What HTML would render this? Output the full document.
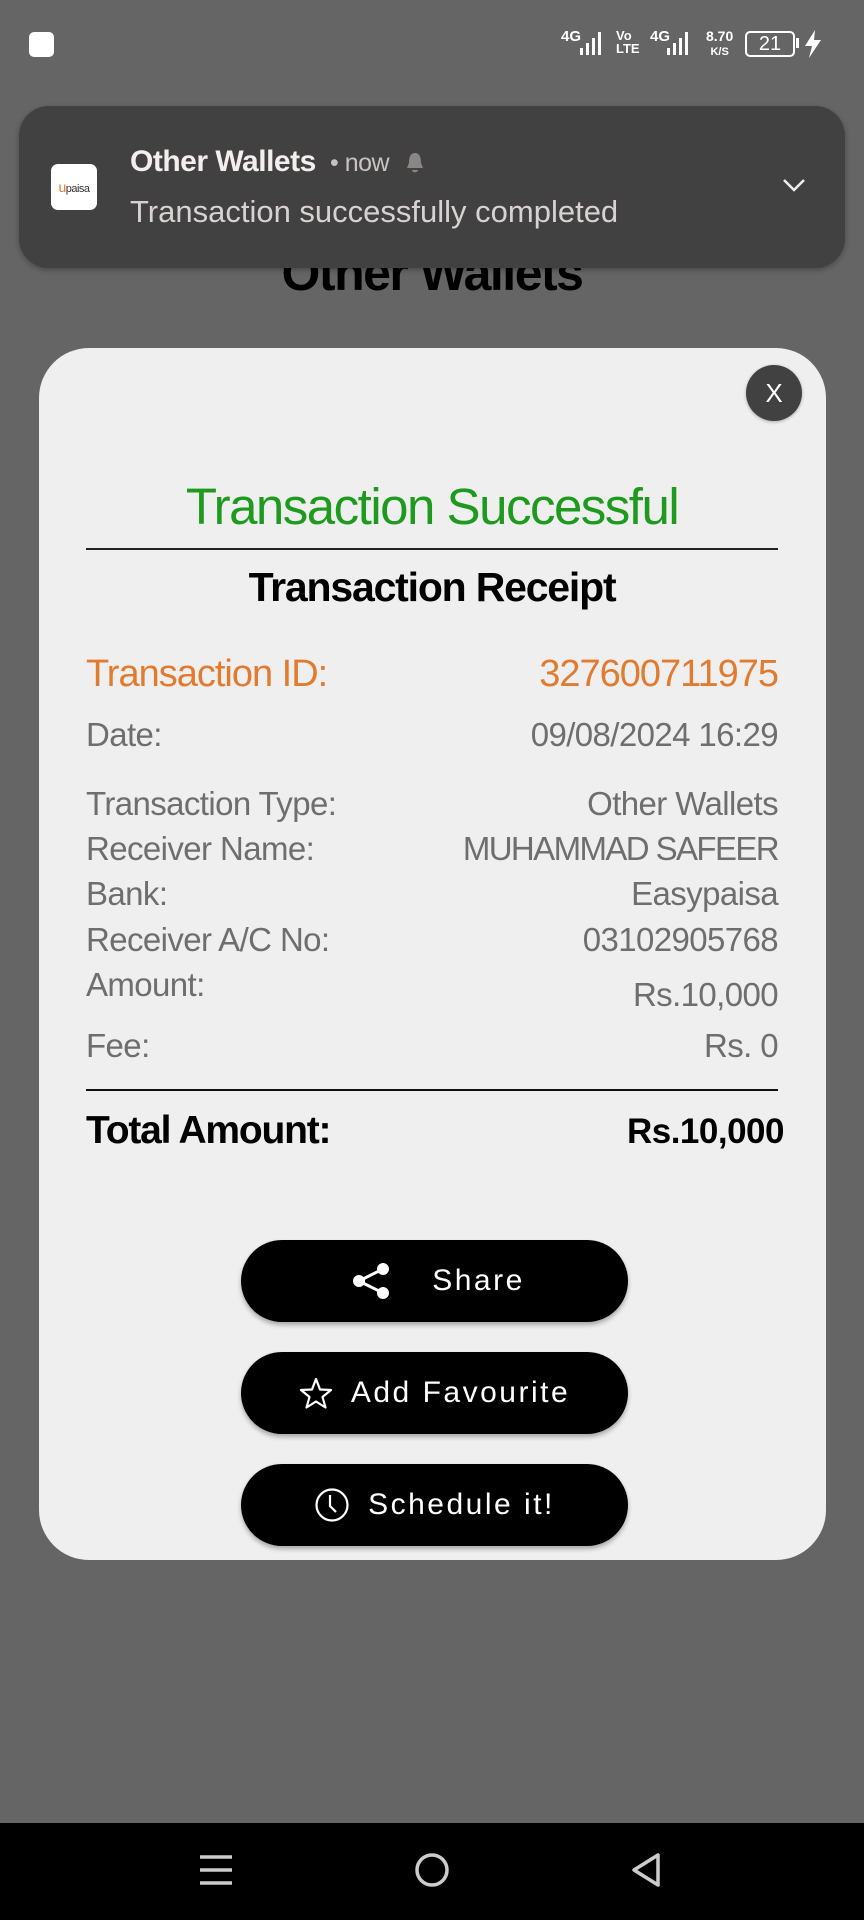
<!DOCTYPE html>
<html><head><meta charset="utf-8"><style>
*{margin:0;padding:0;box-sizing:border-box}
body{width:864px;height:1920px;background:#656565;position:relative;overflow:hidden;font-family:"Liberation Sans",sans-serif}
.a{position:absolute;white-space:nowrap;line-height:1}
.card{position:absolute;left:39px;top:348px;width:787px;height:1212px;background:#efefef;border-radius:50px}
.row{position:absolute;left:86px;width:692px;display:flex;justify-content:space-between;line-height:1;color:#6e6e6e;font-size:33px;letter-spacing:-0.6px}
.btn{position:absolute;left:241px;width:387px;height:82px;border-radius:41px;background:#000;color:#fff;box-shadow:0 3px 5px rgba(0,0,0,.3);font-family:"Liberation Sans",sans-serif;font-size:30px;letter-spacing:2.5px;display:flex;align-items:center;justify-content:center}
</style></head><body>
<div class="a" style="left:29px;top:32px;width:25px;height:25px;background:#fff;border-radius:5px"></div>
<div class="a" style="left:561px;top:29px;color:#fff;font-size:15px;font-weight:bold">4G</div>
<svg class="a" style="left:578px;top:30px" width="30" height="27"><g fill="#fff"><rect x="2" y="18" width="3" height="7"/><rect x="8" y="13" width="3" height="12"/><rect x="14" y="8" width="3" height="17"/><rect x="20" y="2" width="3" height="23"/></g></svg>
<div class="a" style="left:616px;top:29px;color:#fff;font-size:13px;font-weight:bold;line-height:13px">Vo<br>LTE</div>
<div class="a" style="left:650px;top:29px;color:#fff;font-size:15px;font-weight:bold">4G</div>
<svg class="a" style="left:665px;top:30px" width="30" height="27"><g fill="#fff"><rect x="2" y="18" width="3" height="7"/><rect x="8" y="13" width="3" height="12"/><rect x="14" y="8" width="3" height="17"/><rect x="20" y="2" width="3" height="23"/></g></svg>
<div class="a" style="left:706px;top:29px;color:#fff;font-size:14px;font-weight:bold;line-height:14px;text-align:center">8.70<br><span style="font-size:11px">K/S</span></div>
<div class="a" style="left:745px;top:31px;width:50px;height:26px;border:2px solid #fff;border-radius:5px;color:#fff;font-size:20px;text-align:center;line-height:22px">21</div>
<div class="a" style="left:796px;top:38px;width:3px;height:10px;background:#fff"></div>
<svg class="a" style="left:802px;top:29px" width="22" height="30"><path d="M13 1 L3 17 H10 L7 29 L19 11 H12 Z" fill="#fff"/></svg>

<div class="a" style="left:0;width:864px;text-align:center;top:248px;font-size:50px;font-weight:bold;color:#000;letter-spacing:-1.5px">Other Wallets</div>

<div class="a" style="left:19px;top:106px;width:826px;height:162px;background:#414141;border-radius:30px;box-shadow:0 2px 6px rgba(0,0,0,.3)"></div>
<div class="a" style="left:51px;top:164px;width:46px;height:46px;background:#fff;border-radius:7px;font-size:11px;line-height:46px;text-align:center;color:#333;letter-spacing:-0.5px"><span style="color:#e07b30;font-size:14px">u</span>paisa</div>
<div class="a" style="left:130px;top:147px;font-size:30px;font-weight:bold;color:#f4eeee;letter-spacing:-0.5px">Other Wallets <span style="font-weight:normal;color:#c8c2c2;font-size:25px">&nbsp;• now</span></div>
<svg class="a" style="left:405px;top:151px" width="20" height="24"><path d="M10 2 C5 2 4 7 4 12 L2 17 H18 L16 12 C16 7 15 2 10 2 Z M7 19 H13 C13 22 7 22 7 19Z" fill="#8a8686"/></svg>
<div class="a" style="left:130px;top:196px;font-size:31px;color:#d9d2d2">Transaction successfully completed</div>
<svg class="a" style="left:781px;top:176px" width="26" height="18"><path d="M3 4 L13 14 L23 4" stroke="#eee" stroke-width="2.5" fill="none"/></svg>

<div class="card"></div>
<div class="a" style="left:746px;top:365px;width:56px;height:56px;border-radius:50%;background:#414141;box-shadow:0 1px 3px rgba(0,0,0,.3);color:#fff;font-size:26px;line-height:56px;text-align:center">X</div>
<div class="a" style="left:0;width:864px;text-align:center;top:481px;font-size:51px;color:#1e9a1e;letter-spacing:-1.5px">Transaction Successful</div>
<div class="a" style="left:86px;top:548px;width:692px;height:2px;background:#222"></div>
<div class="a" style="left:0;width:864px;text-align:center;top:567px;font-size:41px;font-weight:bold;color:#000;letter-spacing:-1.2px">Transaction Receipt</div>
<div class="row" style="top:655px;font-size:38px;color:#e07b30;letter-spacing:-1px"><span>Transaction ID:</span><span>327600711975</span></div>
<div class="row" style="top:718px"><span>Date:</span><span>09/08/2024 16:29</span></div>
<div class="row" style="top:787px"><span>Transaction Type:</span><span>Other Wallets</span></div>
<div class="row" style="top:832px"><span>Receiver Name:</span><span style="letter-spacing:-1.6px">MUHAMMAD SAFEER</span></div>
<div class="row" style="top:877px"><span>Bank:</span><span>Easypaisa</span></div>
<div class="row" style="top:923px"><span>Receiver A/C No:</span><span>03102905768</span></div>
<div class="row" style="top:968px"><span>Amount:</span><span style="position:relative;top:10px">Rs.10,000</span></div>
<div class="row" style="top:1029px"><span>Fee:</span><span>Rs. 0</span></div>
<div class="a" style="left:86px;top:1089px;width:692px;height:2px;background:#111"></div>
<div class="a" style="left:86px;top:1111px;font-size:39px;font-weight:bold;color:#000;letter-spacing:-1.2px">Total Amount:</div>
<div class="a" style="left:600px;top:1114px;width:184px;text-align:right;font-size:35px;font-weight:bold;color:#000;letter-spacing:-0.5px">Rs.10,000</div>

<div class="btn" style="top:1240px"><svg width="42" height="40" style="margin-right:40px;margin-left:6px"><g fill="#fff"><circle cx="9" cy="20" r="6"/><circle cx="33" cy="8" r="6"/><circle cx="33" cy="32" r="6"/></g><path d="M9 20 L33 8 M9 20 L33 32" stroke="#fff" stroke-width="3"/></svg>Share</div>
<div class="btn" style="top:1352px"><svg width="34" height="32" style="margin-right:18px"><path d="M17 2 L21 12.5 L32 13 L23.5 20 L26.5 30.5 L17 24.5 L7.5 30.5 L10.5 20 L2 13 L13 12.5 Z" fill="none" stroke="#fff" stroke-width="2.2" stroke-linejoin="round"/></svg>Add Favourite</div>
<div class="btn" style="top:1464px"><svg width="36" height="36" style="margin-right:18px"><circle cx="18" cy="18" r="15.5" fill="none" stroke="#fff" stroke-width="2.2"/><path d="M16 8 V19 L22 25" fill="none" stroke="#fff" stroke-width="2.2"/></svg>Schedule it!</div>

<div class="a" style="left:0;top:1823px;width:864px;height:97px;background:#000"></div>
<svg class="a" style="left:198px;top:1852px" width="36" height="36"><g stroke="#ccc" stroke-width="3.5"><path d="M2 5 H34 M2 18 H34 M2 31 H34"/></g></svg>
<svg class="a" style="left:412px;top:1850px" width="40" height="40"><circle cx="20" cy="20" r="15" fill="none" stroke="#ccc" stroke-width="3.5"/></svg>
<svg class="a" style="left:628px;top:1851px" width="36" height="38"><path d="M30 4 V34 L6 19 Z" fill="none" stroke="#ccc" stroke-width="3.5" stroke-linejoin="round"/></svg>
</body></html>
